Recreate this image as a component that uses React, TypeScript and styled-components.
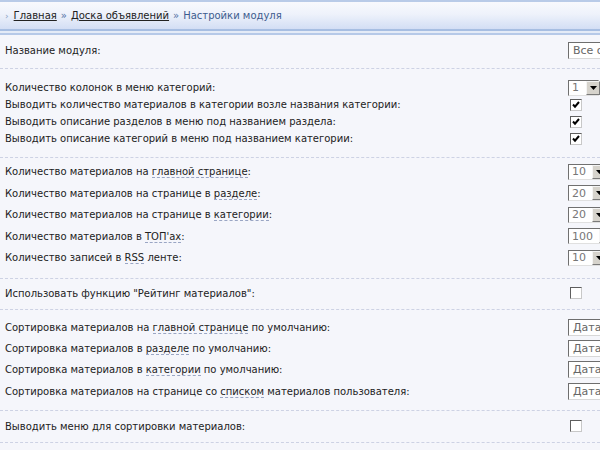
import { createGlobalStyle, styled } from "styled-components";

const Global = createGlobalStyle`
  html, body {
    margin: 0;
    padding: 0;
    background: #f5f6fb;
    overflow: hidden;
  }
  body {
    font-family: "DejaVu Sans", Verdana, sans-serif;
    font-size: 10px;
    color: #222;
  }
`;

const Page = styled.div`
  width: 600px;
  height: 450px;
  overflow: hidden;
`;

const Header = styled.div`
  height: 27px;
  border-top: 2px solid #b9cbe8;
  border-bottom: 2px solid #a7bee2;
  background: linear-gradient(#f8f9fd, #eef2fb 45%, #d3def4);
  display: flex;
  align-items: center;
  padding-left: 5px;
  gap: 4px;
  font-size: 10px;
`;

const HeaderEdge = styled.div`
  height: 2px;
  background: #e4ebf7;
  border-bottom: 2px solid #b6c9e8;
`;

const Arrow = styled.span`
  color: #8ea2c4;
  font-size: 9px;
  margin-right: 1px;
`;

const Crumb = styled.a`
  color: #222;
  text-decoration: underline;
`;

const Sep = styled.span`
  color: #5573a5;
`;

const Current = styled.span`
  color: #3d5c8e;
`;

const Section = styled.div<{ $pt: number; $pb: number }>`
  padding: ${(p) => p.$pt}px 0 ${(p) => p.$pb}px 5px;
  border-bottom: 1px dashed #cdd2e4;
`;

const Row = styled.div<{ $h: number }>`
  height: ${(p) => p.$h}px;
  display: grid;
  grid-template-columns: 563px auto;
  align-items: center;
  white-space: nowrap;
`;

const Label = styled.div`
  overflow: visible;
`;

const Hint = styled.span`
  border-bottom: 1px dashed #9aa6c4;
`;

const Field = styled.div<{ $w: number }>`
  width: ${(p) => p.$w}px;
  box-sizing: border-box;
  height: 17px;
  background: #fff;
  border: 1px solid;
  border-color: #6e6e6e #d8d8d8 #d8d8d8 #6e6e6e;
  display: flex;
  align-items: center;
  padding-left: 4px;
  color: #666;
  font-size: 11px;
  overflow: hidden;
`;

const Select = styled.div<{ $w: number }>`
  width: ${(p) => p.$w}px;
  box-sizing: border-box;
  height: 16px;
  background: #fff;
  border: 1px solid;
  border-color: #707070 #e0e0e0 #e0e0e0 #707070;
  display: flex;
  align-items: center;
  color: #777;
  font-size: 11px;
`;

const SelectText = styled.span<{ $w: number }>`
  padding-left: 3px;
  width: ${(p) => p.$w}px;
  flex: none;
`;

const DropButton = styled.span`
  flex: none;
  width: 12px;
  height: 12px;
  margin-left: 1px;
  background: #d6d3cc;
  border: 1px solid;
  border-color: #f4f4f4 #7a7a7a #7a7a7a #f4f4f4;
  display: flex;
  align-items: center;
  justify-content: center;
`;

const Box = styled.div`
  width: 12px;
  height: 12px;
  box-sizing: border-box;
  margin-left: 2px;
  background: #fff;
  border: 1px solid;
  border-color: #5e5e5e #c8c8c8 #c8c8c8 #5e5e5e;
  display: flex;
  align-items: center;
  justify-content: center;
`;

function Drop() {
  return (
    <DropButton>
      <svg width="7" height="4" viewBox="0 0 7 4">
        <path d="M0 0h7L3.5 4z" fill="#000" />
      </svg>
    </DropButton>
  );
}

function Check({ on }: { on?: boolean }) {
  return (
    <Box>
      {on && (
        <svg width="8" height="8" viewBox="0 0 8 8">
          <path d="M1 3.5l2 2.2L7 1" stroke="#000" strokeWidth="2" fill="none" />
        </svg>
      )}
    </Box>
  );
}

function Sel({ v, w, tw }: { v: string; w: number; tw: number }) {
  return (
    <Select $w={w}>
      <SelectText $w={tw}>{v}</SelectText>
      <Drop />
    </Select>
  );
}

export default function App() {
  return (
    <Page>
      <Global />
      <Header>
        <Arrow>›</Arrow>
        <Crumb>Главная</Crumb>
        <Sep>»</Sep>
        <Crumb>Доска объявлений</Crumb>
        <Sep>»</Sep>
        <Current>Настройки модуля</Current>
      </Header>
      <HeaderEdge />

      <Section $pt={5} $pb={7}>
        <Row $h={21}>
          <Label>Название модуля:</Label>
          <Field $w={150}>Все о</Field>
        </Row>
      </Section>

      <Section $pt={10} $pb={10}>
        <Row $h={17}>
          <Label>Количество колонок в меню категорий:</Label>
          <Sel v="1" w={31} tw={13} />
        </Row>
        <Row $h={17}>
          <Label>Выводить количество материалов в категории возле названия категории:</Label>
          <Check on />
        </Row>
        <Row $h={17}>
          <Label>Выводить описание разделов в меню под названием раздела:</Label>
          <Check on />
        </Row>
        <Row $h={17}>
          <Label>Выводить описание категорий в меню под названием категории:</Label>
          <Check on />
        </Row>
      </Section>

      <Section $pt={3} $pb={9}>
        <Row $h={21.5}>
          <Label>
            Количество материалов на <Hint>главной странице</Hint>:
          </Label>
          <Sel v="10" w={40} tw={19} />
        </Row>
        <Row $h={21.5}>
          <Label>
            Количество материалов на странице в <Hint>разделе</Hint>:
          </Label>
          <Sel v="20" w={40} tw={19} />
        </Row>
        <Row $h={21.5}>
          <Label>
            Количество материалов на странице в <Hint>категории</Hint>:
          </Label>
          <Sel v="20" w={40} tw={19} />
        </Row>
        <Row $h={21.5}>
          <Label>
            Количество материалов в <Hint>ТОП'ах</Hint>:
          </Label>
          <Sel v="100" w={46} tw={26} />
        </Row>
        <Row $h={21.5}>
          <Label>
            Количество записей в <Hint>RSS</Hint> ленте:
          </Label>
          <Sel v="10" w={40} tw={19} />
        </Row>
      </Section>

      <Section $pt={6} $pb={7}>
        <Row $h={17}>
          <Label>Использовать функцию "Рейтинг материалов":</Label>
          <Check />
        </Row>
      </Section>

      <Section $pt={7} $pb={8}>
        <Row $h={21.3}>
          <Label>
            Сортировка материалов на <Hint>главной странице</Hint> по умолчанию:
          </Label>
          <Field $w={100}>Дата</Field>
        </Row>
        <Row $h={21.3}>
          <Label>
            Сортировка материалов в <Hint>разделе</Hint> по умолчанию:
          </Label>
          <Field $w={100}>Дата</Field>
        </Row>
        <Row $h={21.3}>
          <Label>
            Сортировка материалов в <Hint>категории</Hint> по умолчанию:
          </Label>
          <Field $w={100}>Дата</Field>
        </Row>
        <Row $h={21.3}>
          <Label>
            Сортировка материалов на странице со <Hint>списком</Hint> материалов пользователя:
          </Label>
          <Field $w={100}>Дата</Field>
        </Row>
      </Section>

      <Section $pt={7} $pb={7}>
        <Row $h={17}>
          <Label>Выводить меню для сортировки материалов:</Label>
          <Check />
        </Row>
      </Section>
    </Page>
  );
}
